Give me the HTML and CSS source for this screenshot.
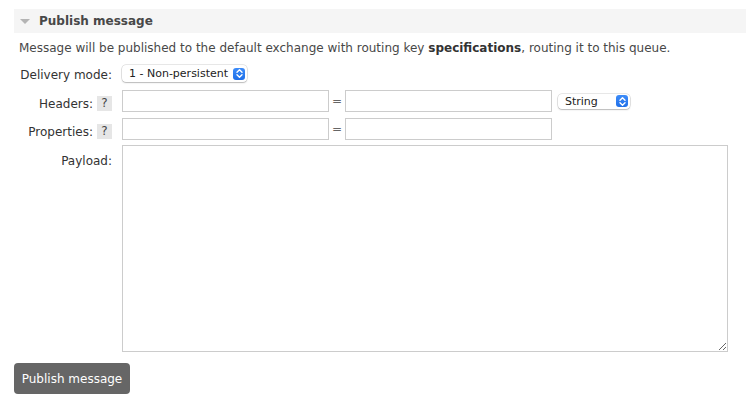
FILE: index.html
```html
<!DOCTYPE html>
<html>
<head>
<meta charset="utf-8">
<link rel="stylesheet" href="styles.css">
</head>
<body>
<div class="section">
  <div class="section-head">
    <span class="tri"></span>
    <span class="section-title">Publish message</span>
  </div>
  <p class="intro">Message will be published to the default exchange with routing key <b>specifications</b>, routing it to this queue.</p>
  <div class="form">
    <div class="label">Delivery mode:</div>
    <div class="field">
      <div class="select sel-mode"><span>1 - Non-persistent</span><span class="stepper"><svg width="9" height="11" viewBox="0 0 9 11"><path d="M2 4.2 L4.5 1.8 L7 4.2 M2 6.8 L4.5 9.2 L7 6.8" fill="none" stroke="#fff" stroke-width="1.4" stroke-linecap="round" stroke-linejoin="round"/></svg></span></div>
    </div>

    <div class="label label-kv">Headers: <span class="help">?</span></div>
    <div class="field kv">
      <input class="txt" type="text"><span class="eq">=</span><input class="txt" type="text">
      <div class="select sel-type"><span>String</span><span class="stepper"><svg width="9" height="11" viewBox="0 0 9 11"><path d="M2 4.2 L4.5 1.8 L7 4.2 M2 6.8 L4.5 9.2 L7 6.8" fill="none" stroke="#fff" stroke-width="1.4" stroke-linecap="round" stroke-linejoin="round"/></svg></span></div>
    </div>

    <div class="label label-kv">Properties: <span class="help">?</span></div>
    <div class="field kv">
      <input class="txt" type="text"><span class="eq">=</span><input class="txt" type="text">
    </div>

    <div class="label label-top">Payload:</div>
    <div class="field">
      <textarea class="payload"></textarea>
    </div>
  </div>
  <button class="btn">Publish message</button>
</div>
</body>
</html>
```
FILE: styles.css
```css
html, body {
  margin: 0;
  padding: 0;
  background: #fff;
}
body {
  font-family: "DejaVu Sans", Verdana, sans-serif;
  font-size: 12px;
  color: #484848;
}
.section {
  margin: 9px 1px 0 14px;
}
.section-head {
  height: 24px;
  background: #f5f5f5;
  display: flex;
  align-items: center;
  padding-left: 6px;
}
.tri {
  width: 0;
  height: 0;
  border-left: 5px solid transparent;
  border-right: 5px solid transparent;
  border-top: 5px solid #b4b4b4;
  margin-right: 9px;
  margin-top: 1px;
}
.section-title {
  font-weight: bold;
  font-size: 12px;
  color: #484848;
}
.intro {
  margin: 7px 0 0 5px;
  line-height: 16px;
}
.intro b {
  color: #333;
}
.form {
  display: grid;
  grid-template-columns: 98px 1fr;
  column-gap: 10px;
  row-gap: 6px;
  margin-top: 9px;
  align-items: center;
}
.label {
  text-align: right;
  color: #333;
  white-space: nowrap;
  display: flex;
  justify-content: flex-end;
  align-items: center;
  gap: 4px;
  margin-left: -1px;
}
.label-kv {
  padding-top: 4px;
  align-items: flex-end;
}
.label-top {
  align-self: start;
  padding-top: 8px;
}
.help {
  display: inline-block;
  background: #e6e6e6;
  width: 15px;
  height: 15px;
  line-height: 15px;
  text-align: center;
  color: #444;
}
.field {
  display: flex;
  align-items: center;
}
.select {
  display: flex;
  align-items: center;
  justify-content: space-between;
  background: #fff;
  border-radius: 4px;
  box-shadow: 0 0 0 0.5px rgba(0,0,0,0.18), 0 1px 1.5px rgba(0,0,0,0.2);
  font-size: 11px;
  color: #222;
  box-sizing: border-box;
  padding: 0 2px 0 7px;
}
.sel-mode {
  width: 125px;
  height: 17px;
  margin-bottom: 2px;
}
.sel-type {
  width: 72px;
  height: 15px;
  margin-left: 6px;
}
.stepper {
  width: 12px;
  height: 12px;
  border-radius: 3px;
  background: linear-gradient(#3d8cf9, #1f6fe8);
  display: flex;
  align-items: center;
  justify-content: center;
}
.stepper svg {
  display: block;
}
.txt {
  width: 207px;
  height: 22px;
  box-sizing: border-box;
  border: 1px solid #ccc;
  margin: 0;
  padding: 0 3px;
  font: inherit;
  outline: none;
}
.eq {
  width: 16px;
  text-align: center;
  color: #666;
}
.payload {
  width: 606px;
  height: 207px;
  box-sizing: border-box;
  border: 1px solid #ccc;
  margin: -1px 0 0 0;
  padding: 2px;
  font: inherit;
  display: block;
  outline: none;
}
.btn {
  margin-top: 11px;
  display: block;
  background: #666;
  color: #fff;
  border: none;
  border-radius: 4px;
  height: 31px;
  width: 116px;
  font-family: "DejaVu Sans", Verdana, sans-serif;
  font-size: 12px;
  padding: 0;
}
```
